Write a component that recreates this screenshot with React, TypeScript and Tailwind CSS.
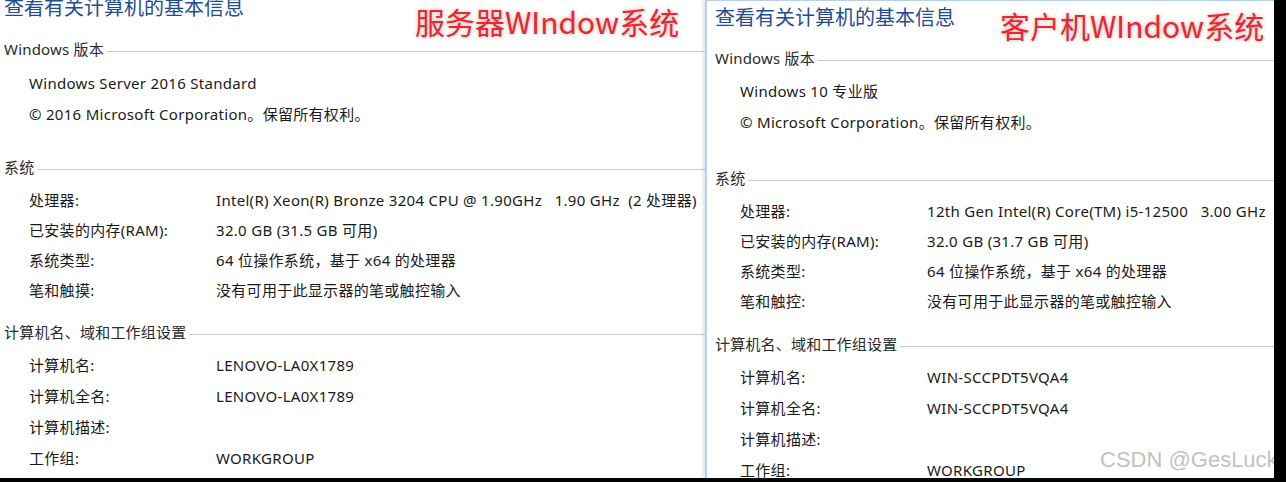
import React from "react";

const FONT = "font-['Segoe_UI','Noto_Sans','Noto_Sans_CJK_SC',sans-serif]";

function Header({ text, cls }: { text: string; cls: string }) {
  return (
    <div className={`flex items-center h-[30px] ${cls}`}>
      <span className="text-[15px] leading-[30px] tracking-[0.2px] text-[#2a2a2a] whitespace-nowrap">{text}</span>
      <div className="flex-1 h-px bg-[#c9c9c9] ml-[3px] mt-[5px]" />
    </div>
  );
}

function Row({ label, value, h, labelW }: { label: string; value?: string; h: string; labelW: string }) {
  return (
    <div className={`flex items-center ${h} text-[15px] tracking-[0.3px] text-[#1a1a1a] whitespace-nowrap`}>
      <span className={`${labelW} shrink-0`}>{label}</span>
      <span className="whitespace-pre">{value}</span>
    </div>
  );
}

export default function App() {
  return (
    <div className={`w-[1286px] h-[482px] bg-black overflow-hidden ${FONT}`}>
      <div className="flex h-[478px]">
        {/* Left panel: server */}
        <div className="relative w-[705px] shrink-0 bg-white overflow-hidden pl-[4px]">
          <div className="mt-[-2px] h-[20px] leading-[20px] text-[20px] text-[#1f4c93] whitespace-nowrap">
            查看有关计算机的基本信息
          </div>
          <Header text="Windows 版本" cls="mt-[16px]" />
          <div className="pl-[25px] mt-[4px]">
            <Row label="Windows Server 2016 Standard" h="h-[31px]" labelW="" />
            <Row label="© 2016 Microsoft Corporation。保留所有权利。" h="h-[31px]" labelW="" />
          </div>
          <Header text="系统" cls="mt-[22px]" />
          <div className="pl-[25px] mt-[3px]">
            <Row label="处理器:" value="Intel(R) Xeon(R) Bronze 3204 CPU @ 1.90GHz   1.90 GHz  (2 处理器)" h="h-[30px]" labelW="w-[187px]" />
            <Row label="已安装的内存(RAM):" value="32.0 GB (31.5 GB 可用)" h="h-[30px]" labelW="w-[187px]" />
            <Row label="系统类型:" value="64 位操作系统，基于 x64 的处理器" h="h-[30px]" labelW="w-[187px]" />
            <Row label="笔和触摸:" value="没有可用于此显示器的笔或触控输入" h="h-[30px]" labelW="w-[187px]" />
          </div>
          <Header text="计算机名、域和工作组设置" cls="mt-[12px]" />
          <div className="pl-[25px] mt-[3px]">
            <Row label="计算机名:" value="LENOVO-LA0X1789" h="h-[31px]" labelW="w-[187px]" />
            <Row label="计算机全名:" value="LENOVO-LA0X1789" h="h-[31px]" labelW="w-[187px]" />
            <Row label="计算机描述:" value="" h="h-[31px]" labelW="w-[187px]" />
            <Row label="工作组:" value="WORKGROUP" h="h-[31px]" labelW="w-[187px]" />
          </div>
          <div className="absolute left-[415px] top-[6px] font-['Noto_Sans_CJK_SC',sans-serif] text-[30px] leading-[30px] text-[#f0252b] whitespace-nowrap [text-shadow:0_0_4px_rgba(0,0,0,0.3)]">
            服务器WIndow系统
          </div>
        </div>

        {/* Right panel: client */}
        <div className="relative w-[569px] shrink-0 bg-white overflow-hidden border-l-2 border-t border-[#b6d0f0] pl-[8px] shadow-[-2px_0_3px_rgba(120,150,200,0.25)]">
          <div className="mt-[7px] h-[20px] leading-[20px] text-[20px] text-[#1f4c93] whitespace-nowrap">
            查看有关计算机的基本信息
          </div>
          <Header text="Windows 版本" cls="mt-[15px]" />
          <div className="pl-[25px] mt-[3px]">
            <Row label="Windows 10 专业版" h="h-[31px]" labelW="" />
            <Row label="© Microsoft Corporation。保留所有权利。" h="h-[31px]" labelW="" />
          </div>
          <Header text="系统" cls="mt-[25px]" />
          <div className="pl-[25px] mt-[3px]">
            <Row label="处理器:" value="12th Gen Intel(R) Core(TM) i5-12500   3.00 GHz" h="h-[30px]" labelW="w-[187px]" />
            <Row label="已安装的内存(RAM):" value="32.0 GB (31.7 GB 可用)" h="h-[30px]" labelW="w-[187px]" />
            <Row label="系统类型:" value="64 位操作系统，基于 x64 的处理器" h="h-[30px]" labelW="w-[187px]" />
            <Row label="笔和触控:" value="没有可用于此显示器的笔或触控输入" h="h-[30px]" labelW="w-[187px]" />
          </div>
          <Header text="计算机名、域和工作组设置" cls="mt-[13px]" />
          <div className="pl-[25px] mt-[3px]">
            <Row label="计算机名:" value="WIN-SCCPDT5VQA4" h="h-[31px]" labelW="w-[187px]" />
            <Row label="计算机全名:" value="WIN-SCCPDT5VQA4" h="h-[31px]" labelW="w-[187px]" />
            <Row label="计算机描述:" value="" h="h-[31px]" labelW="w-[187px]" />
            <Row label="工作组:" value="WORKGROUP" h="h-[31px]" labelW="w-[187px]" />
          </div>
          <div className="absolute left-[293px] top-[9px] font-['Noto_Sans_CJK_SC',sans-serif] text-[30px] leading-[30px] text-[#f0252b] whitespace-nowrap [text-shadow:0_0_4px_rgba(0,0,0,0.3)]">
            客户机WIndow系统
          </div>
          <div className="absolute left-[393px] top-[447px] font-['Liberation_Sans',sans-serif] text-[22px] leading-[24px] text-[#c2c2c2] whitespace-nowrap">
            CSDN @GesLuck
          </div>
        </div>
      </div>
    </div>
  );
}
